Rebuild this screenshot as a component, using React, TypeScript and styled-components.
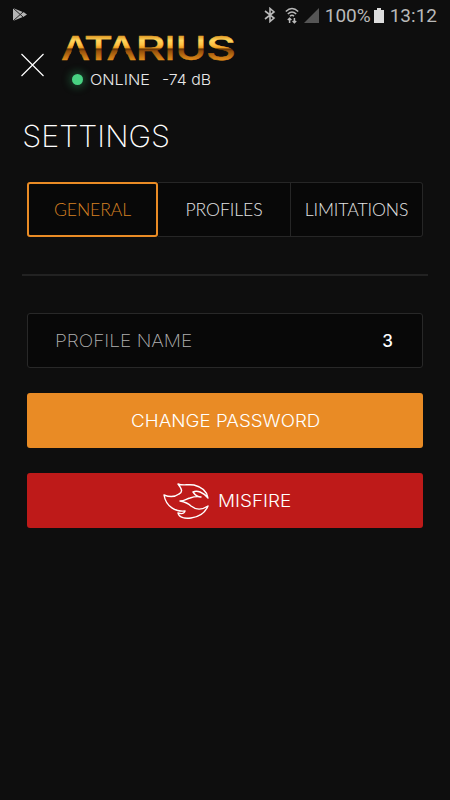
import React from "react";
import styled, { createGlobalStyle } from "styled-components";

const Global = createGlobalStyle`
  * { box-sizing: border-box; }
  body { margin: 0; background: #0e0e0e; }
`;

const Screen = styled.main`
  width: 450px;
  height: 800px;
  overflow: hidden;
  background: #0e0e0e;
  color: #eee;
  font-family: Inter, sans-serif;
`;

const StatusBar = styled.div`
  height: 30px;
  padding: 0 13px 0 12px;
  display: flex;
  align-items: center;
  color: #b9b9b9;
  font: 400 19px/30px Roboto, sans-serif;
`;
const Spacer = styled.div`flex: 1;`;
const StatusText = styled.span`padding-top: 1px;`;
const StatusIcon = styled.svg<{ $gap?: number }>`
  display: block;
  flex: none;
  margin-right: ${(p) => p.$gap ?? 0}px;
`;

const Header = styled.header`
  height: 75px;
  display: flex;
  padding: 4px 0 0 20px;
`;
const CloseButton = styled.button`
  width: 26px;
  height: 26px;
  margin: 18px 13px 0 0;
  padding: 0;
  border: 0;
  background: none;
  svg { display: block; }
`;
const Brand = styled.div`
  display: flex;
  flex-direction: column;
`;
const Logo = styled.svg`
  display: block;
  margin: -10px 0 -6px;
`;
const Connection = styled.div`
  display: flex;
  align-items: center;
  height: 20px;
  margin-top: 5px;
  padding-left: 13px;
`;
const Dot = styled.i`
  width: 11px;
  height: 11px;
  margin-right: 7px;
  border-radius: 50%;
  background: #48d282;
  box-shadow: 0 0 9px 2px rgba(50, 190, 110, 0.38);
`;

const Text = styled.span<{
  $size: number;
  $weight?: number;
  $stretch?: number;
  $color?: string;
  $gap?: number;
  $from?: "left" | "center" | "right";
}>`
  display: inline-block;
  font-size: ${(p) => p.$size}px;
  font-weight: ${(p) => p.$weight ?? 300};
  color: ${(p) => p.$color ?? "#e8e8e8"};
  margin-right: ${(p) => p.$gap ?? 0}px;
  transform: scaleX(${(p) => p.$stretch ?? 1});
  transform-origin: ${(p) => p.$from ?? "left"};
  white-space: nowrap;
`;

const Title = styled.h1`
  height: 60px;
  margin: 0;
  padding: 12px 0 0 22px;
  font-size: 30px;
  font-weight: 200;
  line-height: 38px;
  color: #fff;
  transform: scaleX(1.015);
  transform-origin: left;
`;

const Tabs = styled.nav`
  display: grid;
  grid-template-columns: 131px 133px 132px;
  height: 55px;
  margin: 17px 27px 0;
  border-radius: 3px;
  background: #080808;
`;
const Tab = styled.button<{ $active?: boolean }>`
  margin: 0;
  padding: 0;
  border: ${(p) => (p.$active ? "2px solid #e98b25" : "1px solid #262626")};
  border-left-width: ${(p) => (p.$active ? "2px" : "0")};
  border-radius: ${(p) => (p.$active ? "3px" : "0")};
  &:last-child { border-radius: 0 3px 3px 0; }
  background: transparent;
  color: ${(p) => (p.$active ? "#d68022" : "#e4e4e4")};
  font: 300 17.6px/1 Lato, sans-serif;
  letter-spacing: -0.1px;
`;

const Rule = styled.hr`
  height: 2px;
  margin: 37px 22px 37px;
  border: 0;
  background: #222;
`;

const Stack = styled.section`
  display: flex;
  flex-direction: column;
  gap: 25px;
  padding: 0 27px;
`;
const Field = styled.div`
  height: 55px;
  display: flex;
  align-items: center;
  justify-content: space-between;
  padding: 1px 29px 0 27px;
  border: 1px solid #282828;
  border-radius: 3px;
  background: #080808;
`;
const Action = styled.button<{ $bg: string }>`
  height: 55px;
  display: flex;
  align-items: center;
  justify-content: center;
  padding: 1px 0 0 1px;
  border: 0;
  border-radius: 3px;
  background: ${(p) => p.$bg};
  font-family: inherit;
  svg { margin: -1px 9px 0 0; }
`;

const letters: [string, number, number, number][] = [
  ["A", 2, 29, 500],
  ["T", 25, 29, 450],
  ["A", 47.5, 30, 500],
  ["R", 76.5, 30, 450],
  ["I", 105.5, 11, 550],
  ["U", 116.5, 31, 450],
  ["S", 147, 30, 450],
];

function Wordmark() {
  return (
    <Logo width="180" height="46" viewBox="0 0 180 46" role="img" aria-label="ATARIUS">
      <defs>
        <linearGradient id="gold" gradientUnits="userSpaceOnUse" x1="0" y1="11" x2="0" y2="36">
          <stop offset="0" stopColor="#d98d1a" />
          <stop offset=".22" stopColor="#ffd65c" />
          <stop offset=".4" stopColor="#ffc042" />
          <stop offset=".51" stopColor="#ee9c20" />
          <stop offset=".56" stopColor="#633306" />
          <stop offset=".64" stopColor="#96500b" />
          <stop offset="1" stopColor="#e08c1a" />
        </linearGradient>
      </defs>
      {letters.map(([c, x, w, weight], i) => (
        <text
          key={i}
          x={x}
          y="35.5"
          textLength={w}
          lengthAdjust="spacingAndGlyphs"
          fontFamily="Inter, sans-serif"
          fontWeight={weight}
          fontSize="33"
          fill="url(#gold)"
          stroke="url(#gold)"
          strokeWidth=".4"
        >
          {c}
        </text>
      ))}
      <path d="M16.5 18L24.3 37H8.7ZM62.5 18L70.6 37H54.4Z" fill="#0e0e0e" />
    </Logo>
  );
}

const Flame = () => (
  <svg width="46" height="36" viewBox="0 0 46 36" fill="none" stroke="#fff" strokeWidth="1.4" strokeLinejoin="round">
    <path d="M1 12C6 14 12 14 16 11C20 9 19 6 15 1C20 3 25 1 31 2C39 4 44 8 45 15C40 9 34 7 30 9C32 12 35 14 38 14C33 13 30 14 27 15C23 16 22 18 17 18C22 19 25 20 28 23C33 27 39 27 45 23C42 30 36 34 28 35C21 36 16 34 15 30C19 31 21 31 22 28C13 29 3 24 1 12Z" />
  </svg>
);

export default function App() {
  return (
    <>
      <Global />
      <Screen>
        <StatusBar>
          <StatusIcon width="16" height="16" viewBox="0 0 16 16" fill="#b5b5b5">
            <path d="M1 1L12 5.5L15 7.5L12 9.5L1 14Z" />
            <path d="M1 1L11 10M1 14L11 5" stroke="#222" fill="none" />
          </StatusIcon>
          <Spacer />
          <StatusIcon $gap={9} width="12" height="16" viewBox="0 0 12 16" fill="none" stroke="#b9b9b9" strokeWidth="1.6">
            <path d="M1 4L10 11L6 14.5V1.5L10 5L1 12" />
          </StatusIcon>
          <StatusIcon $gap={5} width="14" height="17" viewBox="0 0 14 17" fill="none" stroke="#b9b9b9" strokeWidth="1.5">
            <path d="M.8 4.5Q7-1.5 13.2 4.5M2.8 7Q7 3 11.2 7M5 9.3Q7 7 9 9.3M4.6 16V11.5M2.8 13L4.6 11.2L6.4 13M9.4 11V15.5M7.6 14L9.4 15.8L11.2 14" />
          </StatusIcon>
          <StatusIcon $gap={6} width="15" height="15"><path d="M15 0V15H0Z" fill="#555" /></StatusIcon>
          <StatusText>100%</StatusText>
          <StatusIcon $gap={6} width="13" height="15"><path d="M6 0H10V2H13V15H3V2H6Z" fill="#ddd" /></StatusIcon>
          <StatusText>13:12</StatusText>
        </StatusBar>
        <Header>
          <CloseButton aria-label="Close">
            <svg width="26" height="26" stroke="#fff" strokeWidth="1.2"><path d="M1.5 2L23.5 24M23.5 2L1.5 24" /></svg>
          </CloseButton>
          <Brand>
            <Wordmark />
            <Connection>
              <Dot />
              <Text $size={15} $gap={16} $stretch={1.08}>ONLINE</Text>
              <Text $size={15} $stretch={1.06}>-74 dB</Text>
            </Connection>
          </Brand>
        </Header>
        <Title>SETTINGS</Title>
        <Tabs>
          <Tab $active>GENERAL</Tab>
          <Tab>PROFILES</Tab>
          <Tab>LIMITATIONS</Tab>
        </Tabs>
        <Rule />
        <Stack>
          <Field>
            <Text $size={17} $weight={200} $stretch={1.125} $color="#b0b0b0">PROFILE NAME</Text>
            <Text $size={17} $weight={500} $from="right" $color="#fff">3</Text>
          </Field>
          <Action $bg="#e98b25">
            <Text $size={16.6} $weight={350} $stretch={1.13} $from="center" $color="#fff">CHANGE PASSWORD</Text>
          </Action>
          <Action $bg="#be1a19">
            <Flame />
            <Text $size={16.6} $weight={350} $stretch={1.14} $gap={6} $color="#fff">MISFIRE</Text>
          </Action>
        </Stack>
      </Screen>
    </>
  );
}
